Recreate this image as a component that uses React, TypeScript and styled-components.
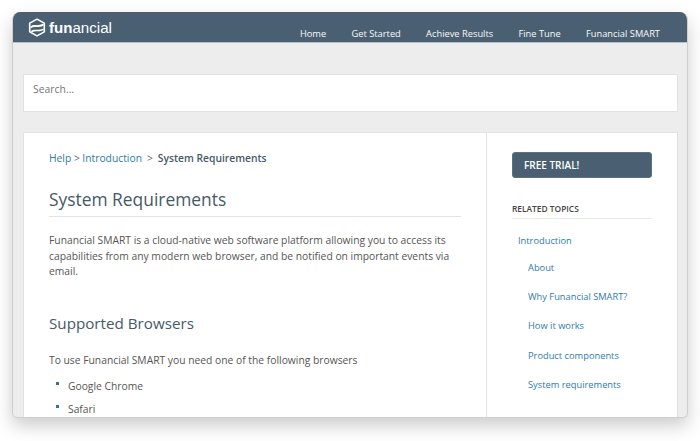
import { FC } from "react";
import styled, { createGlobalStyle } from "styled-components";

const navItems = ["Home", "Get Started", "Achieve Results", "Fine Tune", "Funancial SMART"];

const relatedTopics = [
  "About",
  "Why Funancial SMART?",
  "How it works",
  "Product components",
  "System requirements",
];

const App: FC = () => {
  return (
    <>
      <GlobalStyle />
      <Page>
        <Frame>
          <Header>
            <Logo>
              <svg width="18" height="19" viewBox="0 0 19 20" fill="none">
                <path
                  d="M9.5 1.2 17.2 5.4V14.6L9.5 18.8 1.8 14.6V5.4Z"
                  stroke="#fff"
                  strokeWidth="1.7"
                  strokeLinejoin="round"
                />
                <path
                  d="M2.6 9.2C6 5.6 9.5 9.4 16.4 5.8V8.2C10 11.2 6.4 7.8 2.6 11.4Z"
                  fill="#fff"
                />
                <path d="M2.8 14C6.5 10.6 10 14 16.4 11V12.6C11 15.4 7.5 12.8 4.4 15.2Z" fill="#fff" />
              </svg>
              <LogoText>
                <b>fun</b>ancial
              </LogoText>
            </Logo>
            <Nav>
              {navItems.map((item) => (
                <NavLink key={item}>{item}</NavLink>
              ))}
            </Nav>
          </Header>
          <Body>
            <SearchBox>Search...</SearchBox>
            <Card>
              <Article>
                <Breadcrumb>
                  <Link>Help</Link>
                  <Sep>&gt;</Sep>
                  <Link>Introduction</Link>
                  <Sep $wide>&gt;</Sep>
                  <Current>System Requirements</Current>
                </Breadcrumb>
                <Title>System Requirements</Title>
                <Intro>
                  Funancial SMART is a cloud-native web software platform allowing you to access its
                  capabilities from any modern web browser, and be notified on important events via
                  email.
                </Intro>
                <SubTitle>Supported Browsers</SubTitle>
                <Lead>To use Funancial SMART you need one of the following browsers</Lead>
                <BrowserList>
                  <BrowserItem>Google Chrome</BrowserItem>
                  <BrowserItem>Safari</BrowserItem>
                </BrowserList>
              </Article>
              <Sidebar>
                <TrialButton>FREE TRIAL!</TrialButton>
                <SideHeading>RELATED TOPICS</SideHeading>
                <TopicList>
                  <Topic>Introduction</Topic>
                  {relatedTopics.map((topic) => (
                    <Topic key={topic} $nested>
                      {topic}
                    </Topic>
                  ))}
                </TopicList>
              </Sidebar>
            </Card>
          </Body>
        </Frame>
      </Page>
    </>
  );
};

const GlobalStyle = createGlobalStyle`
  html, body {
    margin: 0;
    background: #fff;
    overflow: hidden;
  }
  body {
    font-family: "Open Sans", "Liberation Sans", sans-serif;
  }
`;

const Page = styled.div`
  width: 700px;
  height: 441px;
  padding: 12px 12px 23px 12px;
  box-sizing: border-box;
  overflow: hidden;
`;

const Frame = styled.div`
  display: flex;
  flex-direction: column;
  width: 676px;
  height: 406px;
  border: 1px solid #cfcfcf;
  border-top: none;
  border-radius: 8px 8px 5px 5px;
  box-sizing: border-box;
  background: #ededed;
  box-shadow: 0 8px 18px rgba(0, 0, 0, 0.2);
  overflow: hidden;
`;

const Header = styled.header`
  flex: 0 0 31px;
  display: flex;
  justify-content: space-between;
  margin: 0 -1px;
  padding: 0 28px 0 16px;
  border-bottom: 1px solid #b6c0c8;
  background: #4a6072;
  box-sizing: border-box;
`;

const Logo = styled.div`
  display: flex;
  align-items: center;
  gap: 3px;
  height: 30px;
  color: #fff;
`;

const LogoText = styled.span`
  font-family: "Liberation Sans", Arial, sans-serif;
  font-size: 15.1px;

  b {
    font-weight: 700;
  }
`;

const Nav = styled.nav`
  display: flex;
  align-items: flex-end;
  gap: 25.3px;
  padding-bottom: 1px;
`;

const NavLink = styled.a`
  font-size: 9.3px;
  font-weight: 500;
  line-height: 15px;
  color: #f8f9fa;
`;

const Body = styled.main`
  flex: 1;
  display: flex;
  flex-direction: column;
  gap: 20px;
  padding: 31px 9px 0 10px;
  min-height: 0;
`;

const SearchBox = styled.div`
  flex: 0 0 38px;
  padding-left: 9px;
  border: 1px solid #e2e2e2;
  box-sizing: border-box;
  background: #fff;
  font-size: 10.4px;
  line-height: 28px;
  color: #777;
`;

const Card = styled.section`
  flex: 1;
  display: grid;
  grid-template-columns: 463px 1fr;
  min-height: 0;
  border: 1px solid #e2e2e2;
  border-bottom: none;
  background: #fff;
  overflow: hidden;
`;

const Article = styled.article`
  padding: 17px 25px 0 25px;
  border-right: 1px solid #e2e2e2;
`;

const Breadcrumb = styled.div`
  display: flex;
  align-items: baseline;
  font-size: 10.3px;
  line-height: 17px;
`;

const Link = styled.a`
  color: #2e7ba8;
`;

const Sep = styled.span<{ $wide?: boolean }>`
  margin: ${(props) => (props.$wide ? "0 5px 0 5px" : "0 2.6px")};
  color: #666;
`;

const Current = styled.span`
  font-weight: 600;
  color: #46596a;
`;

const Title = styled.h1`
  margin: 20px 0 0;
  padding-bottom: 4px;
  border-bottom: 1px solid #e4e4e4;
  font-size: 17.4px;
  font-weight: 400;
  line-height: 25px;
  color: #46596a;
`;

const Intro = styled.p`
  margin: 16px 0 0;
  font-size: 10.3px;
  line-height: 15.6px;
  color: #555;
`;

const SubTitle = styled.h2`
  margin: 32px 0 0;
  font-size: 15.2px;
  font-weight: 400;
  line-height: 22px;
  color: #46596a;
`;

const Lead = styled.p`
  margin: 18px 0 0;
  font-size: 10.3px;
  line-height: 16px;
  color: #555;
`;

const BrowserList = styled.ul`
  margin: 10px 0 0;
  padding: 0;
  list-style: none;
`;

const BrowserItem = styled.li`
  display: flex;
  align-items: center;
  gap: 9px;
  margin-bottom: 7px;
  padding-left: 7px;
  font-size: 10.3px;
  line-height: 16px;
  color: #555;

  &::before {
    content: "";
    width: 3px;
    height: 3px;
    margin-top: -5px;
    background: #2e6fb5;
  }
`;

const Sidebar = styled.aside`
  padding: 19px 25px 0 25px;
`;

const TrialButton = styled.button`
  display: block;
  width: 140px;
  height: 26px;
  padding: 0 11px;
  border: 1px solid #5b7184;
  border-radius: 3px;
  background: #4a6072;
  font-family: inherit;
  font-size: 10px;
  font-weight: 600;
  text-align: left;
  color: #fff;
`;

const SideHeading = styled.h3`
  margin: 24px 0 0;
  padding-bottom: 2px;
  width: 140px;
  border-bottom: 1px solid #ececec;
  font-size: 8.4px;
  font-weight: 600;
  line-height: 14px;
  color: #444;
`;

const TopicList = styled.ul`
  margin: 14px 0 0;
  padding: 0;
  list-style: none;
`;

const Topic = styled.li<{ $nested?: boolean }>`
  margin-left: ${(props) => (props.$nested ? "16px" : "6px")};
  margin-bottom: ${(props) => (props.$nested ? "14.2px" : "12px")};
  font-size: 9.3px;
  line-height: 15px;
  color: #2e7ba8;
`;

export default App;
